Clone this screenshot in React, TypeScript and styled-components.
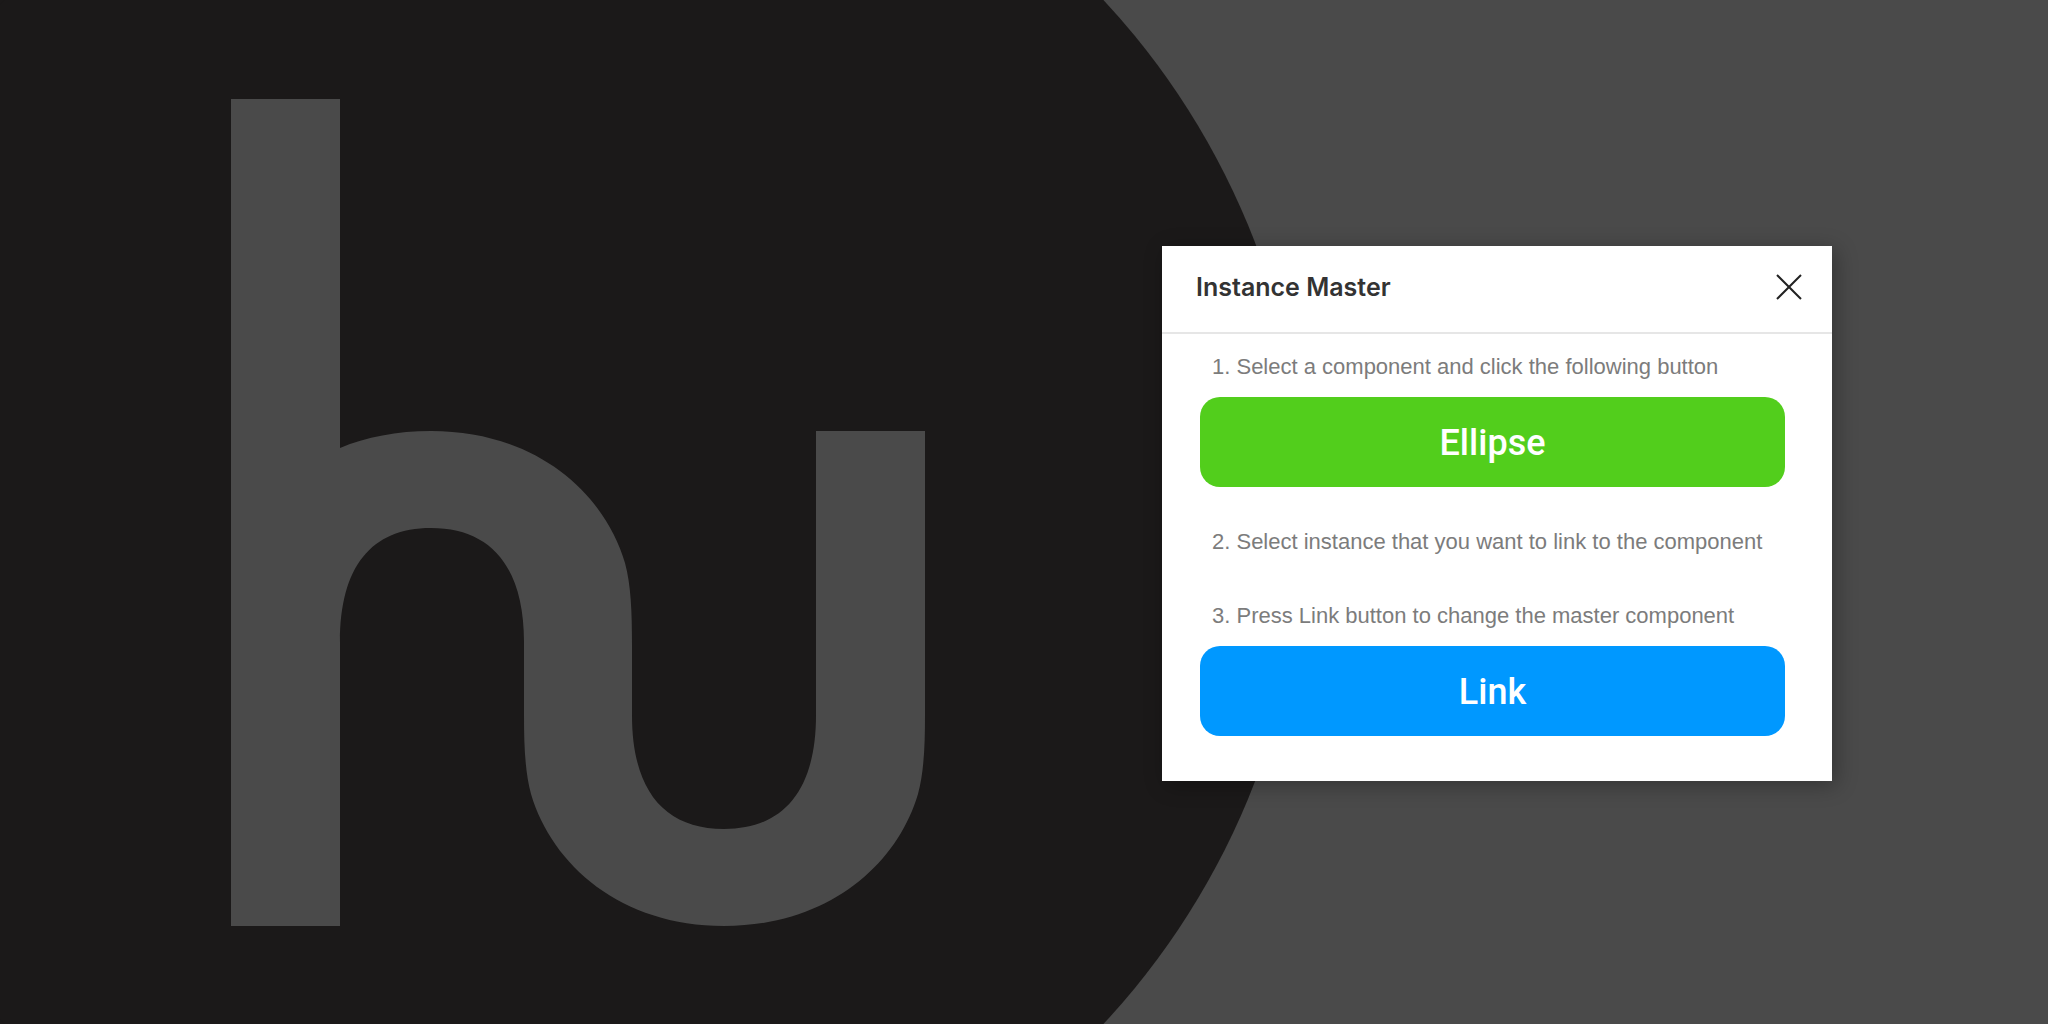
import React from "react";
import styled, { createGlobalStyle } from "styled-components";

const GlobalStyle = createGlobalStyle`
  *, *::before, *::after { box-sizing: border-box; }
  body { margin: 0; background: #4a4a4a; }
`;

const Stage = styled.main`
  position: relative;
  display: flex;
  justify-content: flex-end;
  align-items: flex-start;
  min-height: 100vh;
  padding: 246px 216px 0 24px;
  overflow: hidden;
  background: #4a4a4a;
`;

const Backdrop = styled.svg`
  position: absolute;
  inset: 0;
  width: 100%;
  height: 100%;
`;

const Dialog = styled.section`
  position: relative;
  width: 100%;
  max-width: 670px;
  background: #ffffff;
  box-shadow: 4px 4px 20px rgba(0, 0, 0, 0.3);
  font-family: "Liberation Sans", Arial, sans-serif;
`;

const Header = styled.header`
  display: flex;
  align-items: center;
  justify-content: space-between;
  height: 88px;
  padding: 0 24px 4px 34px;
  border-bottom: 2px solid #e6e6e6;
`;

const Title = styled.h1`
  margin: 0;
  font: 600 25px/32px Inter, sans-serif;
  color: #333333;
`;

const CloseButton = styled.button`
  display: flex;
  padding: 4px;
  border: 0;
  background: none;
  cursor: pointer;
`;

const Steps = styled.div`
  display: flex;
  flex-direction: column;
  padding: 20px 47px 45px 38px;
`;

const Step = styled.div<{ $space?: number }>`
  display: flex;
  flex-direction: column;
  gap: 17px;
  margin-top: ${({ $space = 0 }) => $space}px;
`;

const Instruction = styled.p`
  margin: 0;
  padding-left: 12px;
  font-size: 22px;
  line-height: 26px;
  color: #7c7c7c;
`;

const ActionButton = styled.button<{ $color: string }>`
  height: 90px;
  padding: 2px 16px 0;
  border: 0;
  border-radius: 20px;
  background: ${({ $color }) => $color};
  color: #ffffff;
  font: 500 36px/44px Roboto, sans-serif;
  cursor: pointer;
`;

const BrandBackdrop = () => (
  <Backdrop viewBox="0 0 2048 1024" preserveAspectRatio="xMinYMid slice" aria-hidden="true">
    <rect width="100" height="1024" fill="#1b1919" />
    <circle cx="554" cy="512" r="751" fill="#1b1919" />
    <path
      fill="#4a4a4a"
      d="M231 99H340V448C366 437 397 431 431 431C535 431 604 492 625 563C631 585 632 612 632 645V715C632 790 664 829 724 829C784 829 816 790 816 715V431H925V715C925 745 924 772 918 794C897 865 828 926 724 926C621 926 552 865 531 794C525 772 524 745 524 715V642C524 567 491 528 431 528C371 528 340 567 340 642V926H231Z"
    />
  </Backdrop>
);

export default function App() {
  return (
    <>
      <GlobalStyle />
      <Stage>
        <BrandBackdrop />
        <Dialog role="dialog" aria-labelledby="dialog-title">
          <Header>
            <Title id="dialog-title">Instance Master</Title>
            <CloseButton type="button" aria-label="Close">
              <svg width="30" height="30" viewBox="0 0 30 30" fill="none" stroke="#222222" strokeWidth="2">
                <path d="M3 3L27 27M27 3L3 27" />
              </svg>
            </CloseButton>
          </Header>
          <Steps>
            <Step>
              <Instruction>1. Select a component and click the following button</Instruction>
              <ActionButton type="button" $color="#52ce1c">Ellipse</ActionButton>
            </Step>
            <Step $space={42}>
              <Instruction>2. Select instance that you want to link to the component</Instruction>
            </Step>
            <Step $space={48}>
              <Instruction>3. Press Link button to change the master component</Instruction>
              <ActionButton type="button" $color="#0098ff">Link</ActionButton>
            </Step>
          </Steps>
        </Dialog>
      </Stage>
    </>
  );
}
